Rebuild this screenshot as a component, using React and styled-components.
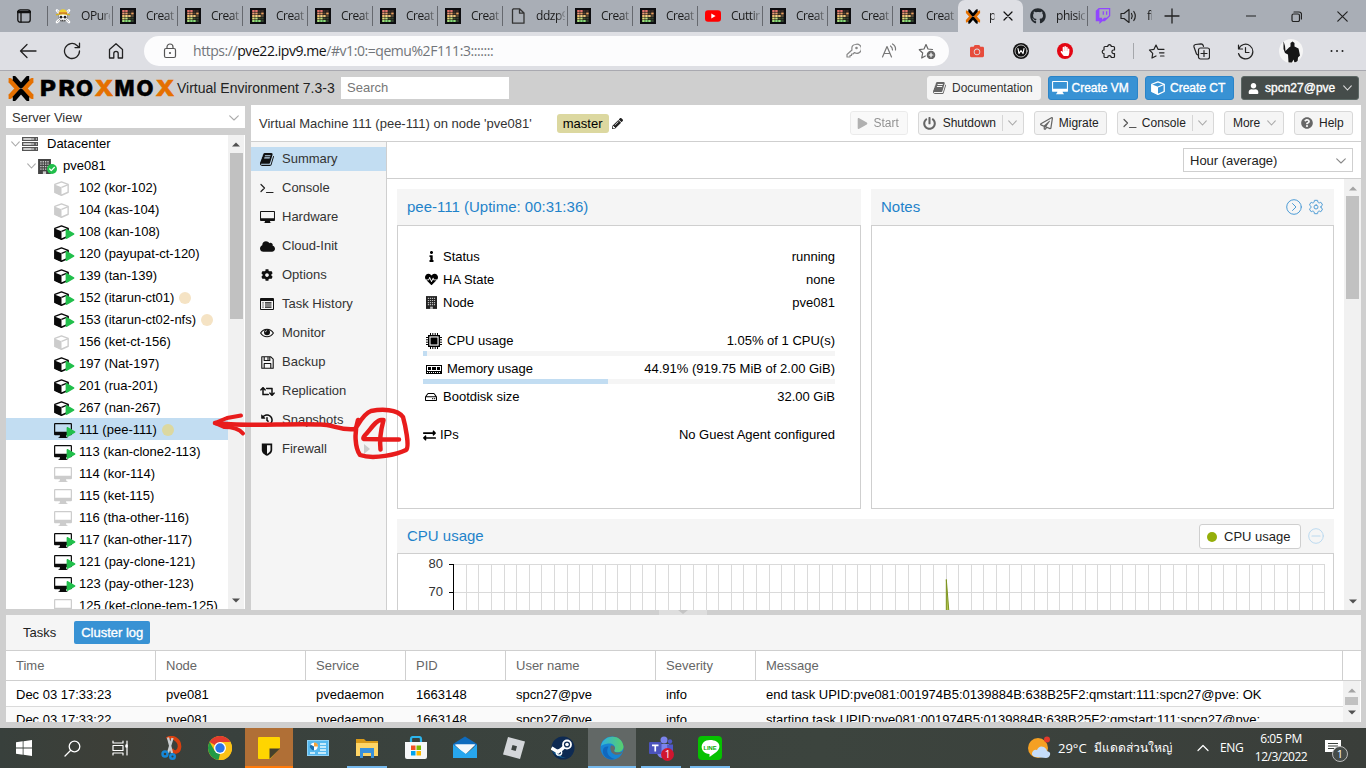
import React from "react";
import styled, { createGlobalStyle, css } from "styled-components";
import {
  FaCloud, FaCog, FaRetweet, FaHistory, FaPlay, FaPowerOff,
  FaRegPaperPlane, FaUser, FaQuestionCircle, FaPencilAlt, FaInfo, FaHeartbeat, FaRegHdd,
  FaExchangeAlt, FaGithub, FaTwitch, FaCheck, FaCamera, FaHandPaper,
} from "react-icons/fa";
import { IoSettingsOutline } from "react-icons/io5";

const GlobalStyle = createGlobalStyle`
  * { box-sizing: border-box; }
  body { margin: 0; overflow: hidden; background: #cfcfcf; }
  svg { display: block; flex: none; }
`;

const ui = '"Liberation Sans", Arial, Helvetica, sans-serif';
const chrome = '"Open Sans", "Noto Sans", sans-serif';

const Screen = styled.div`
  position: relative;
  width: 1366px;
  height: 768px;
  overflow: hidden;
  display: flex;
  flex-direction: column;
  background: #cfcfcf;
  font: 13px/16px ${ui};
  color: #000;
  white-space: nowrap;
`;

/* ---------- browser ---------- */
const TabStrip = styled.div`
  height: 32px;
  flex: none;
  display: flex;
  background: #a9aeb6;
  color: #1b1b1b;
  font: 12px/16px ${chrome};
`;
const StripStart = styled.div`
  width: 48px;
  display: flex;
  align-items: center;
  justify-content: center;
  position: relative;
`;
const Tab = styled.div`
  width: 65px;
  height: 32px;
  flex: none;
  display: flex;
  align-items: center;
  padding-left: 7px;
  gap: ${(p) => p.$gap ?? 10}px;
  ${(p) => p.$active && css`
    background: #dedfe4;
    border-radius: 7px 7px 0 0;
  `}
`;
const TabText = styled.span`
  width: ${(p) => p.$w ?? 29}px;
  flex: none;
  overflow: hidden;
  letter-spacing: -0.45px;
  mask-image: linear-gradient(90deg, #000 70%, rgba(0, 0, 0, 0.2) 100%);
`;
const TabRule = styled.i`
  width: 1px;
  height: 20px;
  margin-left: ${(p) => (p.$first ? 0 : "-8px")};
  background: #66696f;
  ${(p) => p.$first && css`position: absolute; left: 47px; top: 6px;`}
`;
const StripEnd = styled.div`
  flex: 1;
  display: flex;
  align-items: center;
  padding-left: 11px;
`;
const WindowKeys = styled.div`
  margin-left: auto;
  margin-right: 18px;
  display: flex;
  gap: 35px;
  align-items: center;
`;
const NavBar = styled.div`
  height: 39px;
  flex: none;
  display: flex;
  align-items: center;
  background: #dedfe4;
  border-bottom: 1px solid #a9a9b0;
`;
const NavKeys = styled.div`
  width: 144px;
  padding-left: 19px;
  display: flex;
  gap: 26px;
`;
const Address = styled.div`
  width: 805px;
  height: 30px;
  border-radius: 15px;
  background: #fcfcfd;
  display: flex;
  align-items: center;
  padding: 0 13px 0 18px;
  font: 14px/20px ${chrome};
  letter-spacing: -0.44px;
  color: #72757a;
  b { font-weight: 400; color: #111; }
`;
const Url = styled.span`margin-left: 15px; flex: 1;`;
const AddressKeys = styled.div`display: flex; gap: 20px; align-items: center;`;
const Extensions = styled.div`
  display: grid;
  grid-template-columns: repeat(4, 44px) 4px repeat(3, 44px) 48px 44px;
  align-items: center;
  justify-items: center;
  padding-left: 6px;
`;
const Round = styled.span`
  width: ${(p) => p.$size}px;
  height: ${(p) => p.$size}px;
  border-radius: 50%;
  display: flex;
  align-items: center;
  justify-content: center;
  overflow: hidden;
  background: ${(p) => p.$bg};
  color: #fff;
`;
const Divider = styled.i`width: 1px; height: 16px; background: #a5a7ab;`;

/* ---------- application header ---------- */
const AppHeader = styled.header`
  height: 34px;
  flex: none;
  display: flex;
  align-items: center;
  padding: 0 7px;
  font-size: 14px;
  color: #222;
`;
const Product = styled.span`width: 164px; margin-left: 2px;`;
const SearchBox = styled.div`
  width: 168px;
  height: 22px;
  padding: 3px 6px;
  background: #fff;
  color: #777;
  font-size: 13px;
`;
const HeaderKeys = styled.div`margin-left: auto; display: flex; gap: 7px;`;

const tones = {
  plain: css`background: #f5f5f5; border-color: #d8d8d8; color: #222; svg { color: #666; }`,
  light: css`background: #f5f5f5; border-color: #f5f5f5; color: #333; svg { color: #666; }`,
  blue: css`background: #3892d4; border-color: #2a84c8; color: #fff; -webkit-text-stroke: 0.35px #fff;`,
  dark: css`background: #454c4a; border-color: #5c6865; color: #fff; -webkit-text-stroke: 0.35px #fff;`,
};
const Button = styled.div`
  width: ${(p) => p.$w}px;
  height: 24px;
  border: 1px solid;
  border-radius: 3px;
  display: flex;
  align-items: center;
  padding-left: ${(p) => p.$pad ?? 4}px;
  font: 12px/16px ${ui};
  opacity: ${(p) => (p.$off ? 0.5 : 1)};
  ${(p) => tones[p.$tone ?? "plain"]}
`;
const IconSlot = styled.span`
  width: ${(p) => p.$w ?? 16}px;
  margin-right: ${(p) => p.$gap ?? 4}px;
  display: flex;
  justify-content: center;
  flex: none;
`;
const SplitArrow = styled.span`
  margin-left: ${(p) => p.$ml ?? 6}px;
  padding-left: 5px;
  height: 16px;
  display: flex;
  align-items: center;
  border-left: 1px solid ${(p) => (p.$bare ? "transparent" : "#d5d5d5")};
`;

/* ---------- resource tree ---------- */
const Workspace = styled.div`
  height: 505px;
  flex: none;
  display: flex;
  padding: 0 5px 0 6px;
  gap: 6px;
`;
const LeftColumn = styled.aside`
  width: 239px;
  display: flex;
  flex-direction: column;
  gap: 7px;
  padding: 1px 0;
`;
const ViewSelect = styled.div`
  height: 22px;
  background: #fff;
  display: flex;
  align-items: center;
  justify-content: space-between;
  padding: 1px 6px 0;
  color: #333;
`;
const TreePanel = styled.div`
  flex: 1;
  min-height: 0;
  display: flex;
  background: #fff;
  overflow: hidden;
  padding-right: 1px;
`;
const TreeRows = styled.div`width: 222px; margin-top: -3px; overflow: hidden;`;
const TreeRow = styled.div`
  height: 22px;
  display: flex;
  align-items: center;
  padding-top: 2px;
  padding-left: ${(p) => p.$indent}px;
  background: ${(p) => (p.$selected ? "#c2ddf2" : "transparent")};
`;
const TreeIcon = styled.span`
  position: relative;
  width: 25px;
  height: 16px;
  margin-left: ${(p) => p.$ml ?? 0}px;
  color: ${(p) => (p.$off ? "#ccc" : "#0a0a0a")};
  padding-top: 1px;
`;
const Running = styled(FaPlay)`
  position: absolute;
  left: 11px;
  top: 5px;
  color: #21bf4b;
`;
const Online = styled(Round)`position: absolute; left: 9px; top: 6px;`;
const Dot = styled.i`
  width: 12px;
  height: 12px;
  margin-left: 5px;
  border-radius: 50%;
  background: ${(p) => p.$c};
`;
const ScrollTrack = styled.div`
  width: ${(p) => p.$w}px;
  background: #f1f1f1;
  display: flex;
  flex-direction: column;
  align-items: center;
  flex: none;
  height: 100%;
  padding: ${(p) => p.$pad};
`;
const ScrollThumb = styled.div`
  width: 13px;
  height: ${(p) => p.$h}px;
  margin: ${(p) => p.$m} 0 auto;
  background: #c1c1c1;
`;

/* ---------- machine view ---------- */
const Machine = styled.main`width: 1110px; display: flex; flex-direction: column; background: #fff;`;
const TitleBar = styled.div`
  height: 37px;
  flex: none;
  border-bottom: 1px solid #cfcfcf;
  display: flex;
  align-items: center;
  padding: 0 8.500px 0 8px;
  color: #333;
`;
const Title = styled.span`padding-top: 1px;`;
const TagBadge = styled.span`
  height: 19px;
  width: 52px;
  margin: 0 3px 0 25px;
  border-radius: 3px;
  background: #dcd8a0;
  color: #000;
  text-align: center;
  line-height: 20px;
`;
const Actions = styled.div`margin-left: auto; display: flex; gap: 9.6px;`;
const MachineBody = styled.div`flex: 1; min-height: 0; display: flex;`;
const SideNav = styled.nav`
  width: 136px;
  background: #f5f5f5;
  border-right: 1px solid #cfcfcf;
  padding-top: 5px;
  display: flex;
  flex-direction: column;
  gap: 5px;
`;
const NavItem = styled.div`
  height: 24px;
  display: flex;
  align-items: center;
  padding-left: 7px;
  color: #333;
  background: ${(p) => (p.$on ? "#c2ddf2" : "transparent")};
  svg { color: #111; }
`;
const More = styled.i`
  margin-left: 37px;
  border: 5px solid transparent;
  border-left: 6px solid #ccc;
  border-right: 0;
`;
const Content = styled.section`flex: 1; display: flex; flex-direction: column; min-width: 0;`;
const RangeBar = styled.div`
  height: 37px;
  flex: none;
  display: flex;
  justify-content: flex-end;
  align-items: center;
  padding-right: 8px;
  border-bottom: 1px solid #cfcfcf;
`;
const RangeSelect = styled.div`
  width: 170px;
  height: 24px;
  border: 1px solid #cfcfcf;
  display: flex;
  align-items: center;
  justify-content: space-between;
  padding: 1px 6px 0;
  color: #222;
`;
const ScrollArea = styled.div`flex: 1; min-height: 0; display: flex; overflow: hidden;`;
const Cards = styled.div`
  flex: 1;
  display: grid;
  grid-template-columns: 464px 463px;
  grid-template-rows: 320px 200px;
  gap: 10px;
  padding: 10px;
`;
const Card = styled.article`
  grid-column: ${(p) => (p.$wide ? "span 2" : "auto")};
  display: flex;
  flex-direction: column;
`;
const CardHead = styled.div`
  height: ${(p) => p.$h ?? 36}px;
  flex: none;
  background: #f5f5f5;
  padding: 0 10px;
  display: flex;
  align-items: center;
  color: #1f83ca;
  font-size: 15px;
`;
const HeadKeys = styled.div`margin-left: auto; display: flex; gap: 6px; align-items: center; color: #4d9cd6;`;
const CardBody = styled.div`
  flex: 1;
  border: 1px solid #cfcfcf;
  padding: ${(p) => p.$pad ?? 0};
`;
const Stat = styled.div`
  height: ${(p) => p.$h ?? 23}px;
  padding-bottom: ${(p) => p.$pb ?? 0}px;
  display: flex;
  align-items: center;
`;
const StatLabel = styled.span`flex: 1;`;
const Meter = styled.div`
  height: 5px;
  background: #f5f5f5;
  margin-bottom: 5px;
`;
const MeterFill = styled.div`height: 5px; background: #c2ddf2; width: ${(p) => p.$v}%;`;
const Gap = styled.div`height: ${(p) => p.$h}px;`;
const Legend = styled.div`
  width: 102px;
  height: 25px;
  margin-right: 1px;
  border: 1px solid #cfcfcf;
  border-radius: 3px;
  background: #fff;
  color: #222;
  font-size: 13px;
  display: flex;
  align-items: center;
  padding: 1px 0 0 7px;
  gap: 7px;
`;
const LegendDot = styled.i`width: 10px; height: 10px; margin-top: 1px; border-radius: 50%; background: #94ae0a;`;

/* ---------- log ---------- */
const Splitter = styled.div`height: 5px; flex: none; display: flex; justify-content: center;`;
const Handle = styled.div`
  width: 48px;
  background: #dedede;
  display: flex;
  justify-content: center;
  i { border: 5px solid transparent; border-top: 4px solid #c4c4c4; border-bottom: 0; }
`;
const LogPanel = styled.section`
  width: 1356px;
  height: 107px;
  flex: none;
  margin-left: 5px;
  border-left: 1px solid #cfcfcf;
  background: #fff;
  overflow: hidden;
`;
const LogTabs = styled.div`
  height: 36px;
  background: #f5f5f5;
  border-bottom: 1px solid #cfcfcf;
  display: flex;
  align-items: center;
  padding-left: 17px;
  gap: 18px;
  color: #222;
`;
const LogTabOn = styled.span`
  height: 23px;
  width: 76px;
  border-radius: 2px;
  background: #3892d4;
  color: #fff;
  line-height: 23px;
  text-align: center;
  -webkit-text-stroke: 0.35px #fff;
`;
const columns = "150px 150px 100px 100px 150px 100px 587px 18px";
const LogHead = styled.div`
  display: grid;
  grid-template-columns: ${columns};
  height: 30px;
  border-bottom: 1px solid #cfcfcf;
  color: #666;
  line-height: 29px;
  span { padding-left: 10px; border-right: 1px solid #cfcfcf; }
`;
const LogBody = styled.div`display: flex; height: 41px; overflow: hidden;`;
const LogRow = styled.div`
  display: grid;
  grid-template-columns: 150px 150px 100px 100px 150px 100px 587px;
  height: 26px;
  line-height: ${(p) => (p.$alt ? 25 : 27)}px;
  background: ${(p) => (p.$alt ? "#fafafa" : "#fff")};
  border-bottom: 1px solid #dadada;
  span { padding-left: 10px; overflow: hidden; }
`;
const BottomEdge = styled.div`height: 6px; flex: none;`;

/* ---------- taskbar ---------- */
const Taskbar = styled.footer`
  height: 40px;
  flex: none;
  display: flex;
  background: linear-gradient(90deg, #38403c, #3d3f38 8%, #39413d 16%, #3c443e 60%, #3a3e3a);
  color: #fff;
  font: 12px/16px ${chrome};
`;
const SystemKeys = styled.div`width: 147px; display: flex;`;
const AppKeys = styled.div`display: flex; gap: 1px;`;
const TaskKey = styled.div`
  width: 48px;
  height: 40px;
  display: flex;
  align-items: center;
  justify-content: center;
  position: relative;
  background: ${(p) => p.$bg ?? "transparent"};
`;
const OpenMark = styled.i`
  position: absolute;
  bottom: 0;
  left: ${(p) => (p.$full ? 0 : 4)}px;
  right: ${(p) => (p.$full ? 0 : 4)}px;
  height: 2px;
  background: ${(p) => p.$c ?? "#76b9ed"};
`;
const CountBadge = styled(Round)`
  position: absolute;
  left: 24px;
  top: 20px;
  font: 10px/13px ${chrome};
`;
const Tray = styled.div`margin-left: auto; display: flex; align-items: center;`;
const TrayText = styled.span`
  width: ${(p) => p.$w}px;
  margin-left: ${(p) => p.$ml ?? 0}px;
  font-size: ${(p) => p.$size ?? 12}px;
  letter-spacing: ${(p) => p.$ls ?? 0}px;
`;
const Clock = styled.div`width: 62px; text-align: center; font-size: 12px; line-height: 18px; letter-spacing: -0.5px;`;
const Notices = styled.div`width: 42px; margin-left: 12px; position: relative; height: 26px; padding-top: 3px;`;
const NoticeCount = styled(Round)`
  position: absolute;
  left: 8px;
  top: 11px;
  border: 1px solid #bbb;
  font: 11px/14px ${chrome};
`;
const Ink = styled.svg`
  position: absolute;
  left: 206px;
  top: 400px;
  fill: none;
  stroke: #e81c1c;
  stroke-linecap: round;
  stroke-linejoin: round;
  pointer-events: none;
`;

/* ---------- drawings ---------- */
const Line = ({ w = 16, h = 16, sw = 1.2, c = "currentColor", children, ...rest }) => (
  <svg width={w} height={h} viewBox={`0 0 ${w} ${h}`} fill="none" stroke={c} strokeWidth={sw}
    strokeLinecap="round" strokeLinejoin="round" {...rest}>{children}</svg>
);
const Chevron = ({ c = "#aaa", w = 9 }) => (
  <Line w={w} h={6} c={c} sw={1.1}><path d={`M.7 .8 L${w / 2} 5 L${w - 0.7} .8`} /></Line>
);
const Triangle = ({ up, c = "#505050" }) => (
  <svg width="8" height="5" viewBox="0 0 8 5"><path fill={c} d={up ? "M0 4.5 4 .5 8 4.5z" : "M0 .5 4 4.5 8 .5z"} /></svg>
);
const Mark = ({ w = 28, h = 25 }) => (
  <svg width={w} height={h} viewBox="0 0 28 25" fill="none" strokeWidth="4.8" strokeLinejoin="round">
    <g stroke="#e57000"><path d="M1.6 4.3H3L10.4 12.5 3 20.7H1.6" /><path d="M26.4 4.3H25L17.6 12.5 25 20.7H26.4" /></g>
    <g stroke="#000"><path d="M5.8 2.3H7.2L14 10 20.8 2.3H22.2" /><path d="M5.8 22.7H7.2L14 15 20.8 22.7H22.2" /></g>
  </svg>
);
const wordmark = [["P", 5, 16], ["R", 23.5, 16.5], ["O", 41, 17], ["X", 59.5, 19], ["M", 79.5, 20], ["O", 101.5, 17], ["X", 120.5, 19]];
const Wordmark = () => (
  <svg width="140" height="25" viewBox="0 0 140 25">
    <g fontFamily="Inter, sans-serif" fontWeight="800" fontSize="21.500">
      {wordmark.map(([ch, x, len]) => (
        <text key={x} x={x} y="20.200" textLength={len} lengthAdjust="spacingAndGlyphs"
          fill={ch === "X" ? "#e57000" : "#000"} stroke={ch === "X" ? "#e57000" : "#000"} strokeWidth=".5">{ch}</text>
      ))}
    </g>
  </svg>
);
const gridColors = [
  ["#e0736b", "#e0736b", "#3a2b25", "#3a2b25"],
  ["#f09a7a", "#e89f6b", "#5a4a35", "#e9a060"],
  ["#f0c070", "#f2d08a", "#eec27a", "#5a4a35"],
  ["#e6dc7c", "#c3e07c", "#4b5535", "#3a4530"],
  ["#a6e07c", "#86dc78", "#8fe07c", "#33452e"],
];
const GridIcon = () => (
  <svg width="16" height="16" viewBox="0 0 16 16">
    <path d="M0 0h16v16H0z" fill="#0d0d10" />
    {gridColors.map((r, y) => r.map((c, x) => (
      <rect key={`${x}${y}`} x={2.2 + x * 3} y={2 + y * 2.5} width="2.5" height="2" fill={c} />
    )))}
  </svg>
);
const SkullIcon = () => (
  <svg width="16" height="16" viewBox="0 0 16 16">
    <path d="M2 2.5 14 14M14 2.5 2 14" stroke="#fff" strokeWidth="2.6" strokeLinecap="round" />
    <path d="M2 2.5 14 14M14 2.5 2 14" stroke="#777" strokeWidth=".5" />
    <ellipse cx="8" cy="9" rx="4.6" ry="4.2" fill="#fff" stroke="#555" strokeWidth=".5" />
    <path d="M3.5 6C3.6-.3 12.4-.3 12.5 6z" fill="#f0d02c" /><path d="M4 4.6h8v1.4H4z" fill="#c5352c" />
    <path d="M1 6.8Q8 5 15 6.8" stroke="#d5b41f" strokeWidth="1.3" fill="none" />
    <circle cx="6" cy="9.2" r="1.4" fill="#222" /><circle cx="10" cy="9.2" r="1.4" fill="#222" />
    <path d="M5.5 12.5h5" stroke="#333" strokeWidth="1.4" strokeDasharray="1 .6" />
  </svg>
);
const Youtube = () => (
  <svg width="16" height="16" viewBox="0 0 16 16"><rect y="2.3" width="16" height="11.4" rx="3" fill="#f00" /><path d="M6.3 5.5v5L10.6 8z" fill="#fff" /></svg>
);
const Page = () => <Line sw={1.3} c="#333"><path d="M3.5 .8h6L14 5v10.200H2.500V1.800zM9.500 .8V5.200H14" /></Line>;
const Book = ({ size = 14 }) => (
  <svg width={size} height={size} viewBox="0 0 1792 1792" fill="currentColor">
    <path d="M1639 478q40 57 18 129l-275 906q-19 64-76.500 107.500t-122.500 43.500h-923q-77 0-148.500-53.500t-99.500-131.500q-24-67-2-127 0-4 3-27t4-37q1-8-3-21.500t-3-19.500q2-11 8-21t16.500-23.500 16.500-23.500q23-38 45-91.500t30-91.500q3-10 .5-30t-.5-28q3-11 17-28t17-23q21-36 42-92t25-90q1-9-2.500-32t.5-28q4-13 22-30.500t22-22.500q19-26 42.500-84.500t27.500-96.500q1-8-3-25.500t-2-26.500q2-8 9-18t18-23 17-21q8-12 16.500-30.500t15-35 16-36 19.500-32 26.500-23.500 36-11.500 47.500 5.500l-1 3q38-9 51-9h761q74 0 114 56t18 130l-274 906q-36 119-71.500 153.500t-128.500 34.500h-869q-27 0-38 15-11 16-1 43 24 70 144 70h923q29 0 56-15.500t35-41.500l300-987q7-22 5-57 38 15 59 43zm-1064 2q-4 13 2 22.500t20 9.500h608q13 0 25.500-9.500t16.500-22.500l21-64q4-13-2-22.500t-20-9.500h-608q-13 0-25.500 9.500t-16.500 22.500zm-83 256q-4 13 2 22.500t20 9.500h608q13 0 25.500-9.500t16.500-22.500l21-64q4-13-2-22.500t-20-9.500h-608q-13 0-25.500 9.500t-16.500 22.500z" />
  </svg>
);
const Cube = ({ size = 15, face = "none" }) => (
  <svg width={size} height={size} viewBox="0 0 16 16">
    <path d="M8 .9 15.100 3.700V12L8 15.200 .9 12V3.700z" fill={face} stroke="currentColor" strokeWidth="1.500" strokeLinejoin="round" />
    <path d="M.6 3.700 8 6.700V15.600L.6 12.300z" fill="currentColor" />
    <path d="M8 6.800 15.200 3.800" stroke="currentColor" strokeWidth="1.300" />
  </svg>
);
const Monitor = ({ w = 17 }) => (
  <svg width={w} height={w * 0.83} viewBox="0 0 18 15">
    <path fill="currentColor" fillRule="evenodd" d="M1 0h16q1 0 1 1v10.200q0 1-1 1h-5l.5 2h1V15H4.500v-.8h1l.5-2H1q-1 0-1-1V1q0-1 1-1zM1.200 1.200v7.600h15.600V1.200z" />
  </svg>
);
const ServerRack = () => (
  <svg width="16" height="14" viewBox="0 0 16 14">
    {[0, 5, 10].map((y) => (
      <g key={y}><rect x=".5" y={y + 0.5} width="15" height="3" fill="#aaa" stroke="#555" />
        <path d={`M2 ${y + 2}h7`} stroke="#eee" /><path d={`M12 ${y + 2}h2`} stroke="#222" /></g>
    ))}
  </svg>
);
const Building = ({ c = "#222", g = "#bbb", w = 11, h = 13 }) => (
  <svg width={w} height={h} viewBox="0 0 12 14">
    <path d="M0 0h12v14H0z" fill={c} />
    {[2, 4.3, 6.6, 8.9].map((y) => <path key={y} d={`M2 ${y + 0.5}h8`} stroke={g} strokeWidth="1.300" strokeDasharray="1.300 .9" />)}
    <path d="M4.500 11.500h3V14h-3z" fill={g} />
  </svg>
);
const Prompt = ({ c = "#222" }) => (
  <Line w={14} h={12} c={c} sw={1.2}><path d="M1 2.500 4.500 6 1 9.500M6.500 10.500h6.500" /></Line>
);
const Shield = () => (
  <svg width="12" height="13" viewBox="0 0 12 13"><path fillRule="evenodd" fill="currentColor" d="M.8 .5h10.400V7c0 3-3 4.800-5.200 5.800C3.800 11.800 .8 10 .8 7zM6 2.200v8.700C8 9.800 9.500 8.500 9.500 7V2.200z" /></svg>
);
const ListAlt = () => (
  <svg width="14" height="12" viewBox="0 0 14 12"><path fill="currentColor" fillRule="evenodd" d="M1 0h12q1 0 1 1v10q0 1-1 1H1q-1 0-1-1V1q0-1 1-1zM1 3v8h12V3z" />
    <path d="M2.500 4.800h1M5 4.800h6.500M2.500 7h1M5 7h6.500M2.500 9.200h1M5 9.200h6.500" stroke="currentColor" strokeWidth="1.200" /></svg>
);
const EyeIcon = () => (
  <svg width="14" height="10" viewBox="0 0 14 10"><path d="M.6 5Q3 1.200 7 1.200T13.400 5Q11 8.800 7 8.800T.6 5z" fill="none" stroke="currentColor" strokeWidth="1.100" /><circle cx="7" cy="4.300" r="3" fill="currentColor" /><path d="M5.300 4.200Q5.400 2.700 7 2.600" stroke="#f5f5f5" strokeWidth=".7" fill="none" /></svg>
);
const Floppy = () => (
  <Line w={13} h={13} sw={1.1}><path d="M.8 .8H9.800L12.200 3.200V12.200H.8zM3.200 .8V4.500H8.800V.8M3.200 12.200V7.500H9.800V12.200M7 1.500v2" /></Line>
);
const Cpu = () => (
  <svg width="16" height="16" viewBox="0 0 16 16"><g fill="none" stroke="#000">
    <path d="M4.500 0v16M6.800 0v16M9.200 0v16M11.500 0v16M0 4.500h16M0 6.800h16M0 9.200h16M0 11.500h16" />
    <rect x="2.700" y="2.700" width="10.600" height="10.600" fill="#fff" strokeWidth="1.400" /></g><path d="M4.500 4.500h7v7h-7z" /></svg>
);
const Ram = () => (
  <svg width="16" height="9" viewBox="0 0 16 9" shapeRendering="crispEdges"><path fillRule="evenodd" d="M0 0h16v9H0zM1 1v5h14V1z" /><path d="M2 2h3v3H2zM6 2h4v3H6zM11 2h3v3h-3z" /><path d="M1 7.500h14" stroke="#fff" strokeDasharray="1 1" /></svg>
);
const GridChart = () => (
  <svg width="935" height="90" viewBox="0 0 935 90" shapeRendering="crispEdges">
    {Array.from({ length: 70 }, (_, i) => <rect key={i} x={Math.round(55 + i * 12.63)} y="10" width="1" height="80" fill="#dadada" />)}
    <path d="M55 10.500h872M55 38.500h872M55 66.500h872" stroke="#dadada" />
    <path d="M55.500 10v80M51 10.500h4M51 38.500h4M51 66.500h4" stroke="#000" />
    <path d="M548.300 90V25.500L553.500 90z" fill="#94ae0a" fillOpacity=".7" stroke="#7d9420" shapeRendering="auto" />
    <g fontFamily="Liberation Sans, Arial, sans-serif" fontSize="13" fill="#333" textAnchor="end">
      <text x="45" y="14">80</text><text x="45" y="42">70</text><text x="45" y="70">60</text>
    </g>
  </svg>
);

/* taskbar application drawings */
const Svg = ({ s = 24, children }) => <svg width={s} height={s} viewBox="0 0 24 24">{children}</svg>;
const WindowsLogo = () => <svg width="16" height="16" viewBox="0 0 16 16" fill="#fff"><path d="M0 2.300 6.700 1.300V7.600H0zM7.500 1.200 16 0v7.600H7.500zM0 8.400h6.700v6.300L0 13.700zM7.500 8.400H16V16l-8.500-1.200z" /></svg>;
const Snip = () => <Svg><path d="M8 3C13-1 21 4 20.500 11 20 17 14 17.500 12.500 13" fill="none" stroke="#d8400f" strokeWidth="3.600" /><path d="M9 1.500 13 17M13.500 2 9 17" stroke="#c9cdd0" strokeWidth="2.300" /><g fill="none" stroke="#1687d9" strokeWidth="2.400"><circle cx="6" cy="18" r="2.500" /><circle cx="13.500" cy="20.500" r="2.300" /></g></Svg>;
const ChromeLogo = () => <Svg><circle cx="12" cy="12" r="12" fill="#fbc116" /><path d="M12 12 1.600 6A12 12 0 0 1 22.400 6H12z" fill="#e33b2e" /><path d="M1.600 6 6.800 15 12 18 10.500 23.900A12 12 0 0 1 1.600 6z" fill="#229a45" /><path d="M22.400 6H12v6l5 3-6.500 8.900A12 12 0 0 0 22.400 6z" fill="#fbc116" /><circle cx="12" cy="12" r="6" fill="#fff" /><circle cx="12" cy="12" r="4.700" fill="#2a74e8" /></Svg>;
const Sticky = () => <Svg><path d="M1 2q0-1 1-1h20q1 0 1 1v10l-10 11H2q-1 0-1-1z" fill="#ffd500" /><path d="M12.500 12.500H23L12.500 23z" fill="#46402c" /></Svg>;
const ControlPanel = () => <svg width="22" height="17" viewBox="0 0 22 17"><rect x=".5" y=".5" width="21" height="15" fill="#56b8ee" stroke="#8fd2f7" /><circle cx="7" cy="6.500" r="3.700" fill="#fff" /><path d="M7 6.500V2.500a4 4 0 0 1 4 4z" fill="#f6a33c" /><path d="M7 6.500v4a4 4 0 0 1-3.500-6z" fill="#176fb3" /><path d="M13 4h6M13 7h6M13 10h6M3 13h5M11 13h8" stroke="#eafaff" strokeWidth="1.300" /></svg>;
const Explorer = () => <Svg><path d="M1 3h8l2 2h12v5H1z" fill="#d99a19" /><path d="M1 7h22v13H1z" fill="#ffd566" /><path d="M5 12h14v10h-3v-5H8v5H5z" fill="#3a91db" /></Svg>;
const Store = () => <Svg><path d="M7 6V3q0-2 2-2h6q2 0 2 2v3" fill="none" stroke="#2cb5ec" strokeWidth="2.200" /><path d="M1 6h22v15q0 2-2 2H3q-2 0-2-2z" fill="#f6f7f8" /><path d="M7 9.500h4.500V14H7z" fill="#f25022" /><path d="M12.500 9.500H17V14h-4.500z" fill="#7fba00" /><path d="M7 15h4.500v4.500H7z" fill="#00a4ef" /><path d="M12.500 15H17v4.500h-4.500z" fill="#ffb900" /></Svg>;
const Mail = () => <Svg><path d="M0 8 12 .5 24 8v3H0z" fill="#0f6bbd" /><path d="M1.500 8.500h21L12 19z" fill="#f4f8fb" /><path d="M0 8.500 13 18 24 8.500V22H0z" fill="#27a6ee" /><path d="M3 8.500H22L12 16.500z" fill="#f4f8fb" /></Svg>;
const Roblox = () => <Svg><path d="M6 1 23 5.500 18 23 1 18.500z" fill="#d4d7da" /><path d="M10.500 9 15 10.200 13.700 15 9.200 13.800z" fill="#3c4340" /></Svg>;
const Steam = () => <Svg><circle cx="12" cy="12" r="11.500" fill="#0e2a52" /><path d="M1 15Q12 27 22 17 16 23.500 9 20z" fill="#1381b8" /><path d="M0.500 12 7 16 11 13 15 9" stroke="#fff" strokeWidth="3.500" fill="none" /><circle cx="16" cy="8.500" r="4" fill="#0e2a52" stroke="#fff" strokeWidth="1.800" /><circle cx="16" cy="8.500" r="1.800" fill="#fff" /><circle cx="8" cy="16.500" r="2.700" fill="none" stroke="#fff" strokeWidth="1.300" /></Svg>;
const Edge = () => (
  <Svg><defs><linearGradient id="edgeTop"><stop stopColor="#2dafe0" /><stop offset="1" stopColor="#59cf6a" /></linearGradient></defs>
    <circle cx="12" cy="12" r="11.500" fill="#1784d4" /><path d="M1 10C3-2 22-3 23.500 10.500c0 5-5 6.500-8.500 5.500-2-.7 0-2 0-4 0-3-3-5-7-4.500-3 .3-5.500 1.500-7 2.500z" fill="url(#edgeTop)" />
    <path d="M8.500 10.500C5 16 9 22 15 23 8 25 2 20 3 14c.5-3 3-4 5.500-3.500z" fill="#1067bd" /><path d="M11 9.500c3-.5 4 1.500 4 3-1 2-1.500 2.500 0 3.500 3 1.200 6 .5 8-1-2 4-7 5-10 2.500-3-2-3-6-2-8z" fill="#666b68" /></Svg>
);
const Teams = () => <Svg><circle cx="15" cy="4" r="3.500" fill="#7b83eb" /><circle cx="21" cy="5.500" r="2.200" fill="#5059c9" /><path d="M9 8h11v9q-1 5-6 5t-6-5z" fill="#7b83eb" /><path d="M18 8.500h6v7q-1 4-5 4z" fill="#5059c9" /><rect y="6" width="12.500" height="12" rx="1" fill="#4b53bc" /><path d="M3 9.300h6.500M6.250 9.300v6.200" stroke="#fff" strokeWidth="1.700" /></Svg>;
const LineApp = () => <Svg><rect width="24" height="24" rx="4" fill="#06c100" /><path d="M12 4c11 0 12 9 5 13l-5.500 4v-3C1 17.500 1 4 12 4z" fill="#fff" /><text x="12" y="13.500" fontFamily="Liberation Sans, Arial, sans-serif" fontWeight="700" fontSize="5.800" fill="#06a800" textAnchor="middle">LINE</text></Svg>;
const Weather = () => <Svg><circle cx="11" cy="12" r="10" fill="#f5a023" /><path d="M8 21q-5-2-2-6 2-2 4-1 2-5 7-3 3 2 3 4 4 1 3 4-1 3-4 3z" fill="#c5ddfa" /><circle cx="20" cy="3.500" r="3" fill="#e33a2b" /></Svg>;

const Favicon = { grid: GridIcon, skull: SkullIcon, tube: Youtube, page: Page };
const tabs = [
  ["skull", "OPure"], ["grid", "Creat"], ["grid", "Creat"], ["grid", "Creat"], ["grid", "Creat"],
  ["grid", "Creat"], ["grid", "Creat"], ["page", "ddzp9"], ["grid", "Creat"], ["grid", "Creat"],
  ["tube", "Cuttin"], ["grid", "Creat"], ["grid", "Creat"], ["grid", "Creat"],
];
const guests = [
  ["ct", "102 (kor-102)"], ["ct", "104 (kas-104)"], ["ct", "108 (kan-108)", 1], ["ct", "120 (payupat-ct-120)", 1],
  ["ct", "139 (tan-139)", 1], ["ct", "152 (itarun-ct01)", 1, "#f5e3c4"], ["ct", "153 (itarun-ct02-nfs)", 1, "#f5e3c4"],
  ["ct", "156 (ket-ct-156)"], ["ct", "197 (Nat-197)", 1], ["ct", "201 (rua-201)", 1], ["ct", "267 (nan-267)", 1],
  ["vm", "111 (pee-111)", 1, "#dcd8a0", true], ["vm", "113 (kan-clone2-113)", 1], ["vm", "114 (kor-114)"],
  ["vm", "115 (ket-115)"], ["vm", "116 (tha-other-116)"], ["vm", "117 (kan-other-117)", 1],
  ["vm", "121 (pay-clone-121)", 1], ["vm", "123 (pay-other-123)", 1], ["vm", "125 (ket-clone-tem-125)"],
];
const navItems = [
  ["Summary", <Book size={15} />], ["Console", <Prompt />], ["Hardware", <Monitor w={15} />],
  ["Cloud-Init", <FaCloud size={15} />], ["Options", <FaCog size={12} />], ["Task History", <ListAlt />],
  ["Monitor", <EyeIcon />], ["Backup", <Floppy />], ["Replication", <FaRetweet size={15} />],
  ["Snapshots", <FaHistory size={12} />], ["Firewall", <Shield />],
];
const log = [
  ["Dec 03 17:33:23", "pve081", "pvedaemon", "1663148", "spcn27@pve", "info", "end task UPID:pve081:001974B5:0139884B:638B25F2:qmstart:111:spcn27@pve: OK"],
  ["Dec 03 17:33:22", "pve081", "pvedaemon", "1663148", "spcn27@pve", "info", "starting task UPID:pve081:001974B5:0139884B:638B25F2:qmstart:111:spcn27@pve:"],
];
const apps = [
  [Snip], [ChromeLogo], [Sticky, "#b06f36", "#ff7a0a", true], [ControlPanel], [Explorer, null, "#76b9ed"], [Store],
  [Mail], [Roblox], [Steam], [Edge, "#626866", "#76b9ed", true], [Teams, null, "#76b9ed", false, "1"], [LineApp, null, "#76b9ed"],
];

function Browser() {
  return (
    <>
      <TabStrip>
        <StripStart><Line w={14} h={14} sw={1.3} c="#111"><rect x=".8" y=".8" width="12.400" height="12.400" rx="2.500" /><path d="M1 3h12" strokeWidth="2.500" /><path d="M4 4v9" /></Line><TabRule $first /></StripStart>
        {tabs.map(([kind, label], i) => {
          const Icon = Favicon[kind];
          return <Tab key={i}><Icon /><TabText>{label}</TabText>{i < 13 && <TabRule />}</Tab>;
        })}
        <Tab $active $gap={8}><Mark w={16} h={15} /><TabText $w={6}>p</TabText><Line w={10} h={10} c="#111"><path d="M1 1 9 9M9 1 1 9" /></Line></Tab>
        <Tab><FaGithub size={16} color="#24292e" /><TabText>phisic</TabText><TabRule /></Tab>
        <Tab $gap={9}><FaTwitch size={16} color="#9146ff" /><Line w={18} h={16} c="#222"><path d="M1 5.500h3L9 1.500v13L4 10.500H1zM11.500 5.500q1.500 2.500 0 5M13.800 3.500q3 4.500 0 9" /></Line><TabText $w={5}>fi</TabText><TabRule /></Tab>
        <StripEnd>
          <Line c="#222" sw={1.3}><path d="M8 1v14M1 8h14" /></Line>
          <WindowKeys>
            <Line w={10} h={10} c="#222"><path d="M0 5h10" /></Line>
            <Line w={11} h={11} c="#222"><rect x="1" y="3" width="7.500" height="7.500" rx="1.500" /><path d="M3 1h5q2.500 0 2.500 2.500V8" /></Line>
            <Line w={11} h={11} c="#222"><path d="M.8 .8 10.200 10.200M10.200 .8 .8 10.200" /></Line>
          </WindowKeys>
        </StripEnd>
      </TabStrip>
      <NavBar>
        <NavKeys>
          <Line w={18} h={18} sw={1.3} c="#222"><path d="M17 9H1.500M8 2.500 1.500 9 8 15.500" /></Line>
          <Line w={18} h={18} sw={1.3} c="#222"><path d="M16.500 9A7.500 7.500 0 1 1 14 3.400L16.300 5.500M16.500 1.200V5.600H12" /></Line>
          <Line w={18} h={18} sw={1.3} c="#222"><path d="M2.500 7.500 9 1.800l6.500 5.700V16h-4.300v-4.500a2.200 2.200 0 0 0-4.400 0V16H2.500z" /></Line>
        </NavKeys>
        <Address>
          <Line c="#555" sw={1.2}><rect x="2.500" y="5.500" width="11" height="9" rx="1.500" /><path d="M5 5.500V4a3 3 0 0 1 6 0v1.500" /><circle cx="8" cy="10" r=".5" /></Line>
          <Url>https://<b>pve22.ipv9.me</b>/#v1:0:=qemu%2F111:3:::::::</Url>
          <AddressKeys>
            <Line c="#888" w={15}><path d="M9.500 1.500a4.500 4.500 0 1 1-1 8L7 11H5.500v1.500H4V14H1v-2.500L6 7C5.300 3.500 7 1.500 9.500 1.500z" /><circle cx="10.500" cy="5" r=".7" /></Line>
            <Line c="#777" w={17}><path d="M1.500 14 6 3.500 10.500 14M3 10.500h6M9.500 3q2 1.500 2 4M11.500 1q3.500 2 3 6" /></Line>
            <Line c="#666" w={18}><path d="M8 1.500 10 6l4.500 .5M8 1.500 6 6l-4.700.7L4.700 10l-1 5 3.600-2" /><circle cx="13" cy="12" r="3.700" fill="#666" /><path d="M13 10.200v3.600M11.200 12h3.600" stroke="#fff" /></Line>
          </AddressKeys>
        </Address>
        <Extensions>
          <FaCamera size={14} color="#e74c3c" />
          <Round $size={16} $bg="#111"><Line w={14} h={14} c="#fff"><circle cx="7" cy="7" r="6" strokeWidth=".7" /><path d="M4 4.500 5 9.500 7 6.500 9 9.500 10 4.500" /></Line></Round>
          <Round $size={16} $bg="#e30613"><FaHandPaper size={10} /></Round>
          <Line c="#222"><path d="M4 3.500h2.700a1.800 1.800 0 1 1 3.600 0H12.500q1 0 1 1V7h-.8a1.800 1.800 0 1 0 0 3.600h.8v2.900q0 1-1 1h-2.200a1.800 1.800 0 1 0-3.600 0H4q-1 0-1-1v-2.900a1.800 1.800 0 1 1 0-3.600V4.500q0-1 1-1z" /></Line>
          <Divider />
          <Line w={18} c="#222"><path d="M8 13 4 15l.7-4.700L1.500 7l4.500-.7L8 2l2 4.300h6M11.500 9.800H16M12.500 13H16" /></Line>
          <Line w={17} h={17} c="#222"><path d="M5 12 3.500 11 1 4q-.5-2 1.500-2.500L8 .8q2 0 2.500 2.500" /><rect x="5.500" y="5" width="11" height="11" rx="2" /><path d="M11 7.500v6M8 10.500h6" /></Line>
          <Line w={17} h={17} c="#222"><path d="M1.500 2v4h4M1.700 6A7.300 7.300 0 1 1 1.500 10.500M8.500 4.500v5H12" /></Line>
          <Round $size={24} $bg="#f5f5f5"><svg width="24" height="24" viewBox="0 0 24 24"><path d="M4.500 2 6 7l.5 5 3.500-3.500 1.500-1V4l2-1.500 2 1.500v3.500l4 2 1.500 7-2 2-.5 5h-3l-1-3-1.500 3H9.500l-.5-8-3-1.500L4.500 10z" fill="#161616" /></svg></Round>
          <Line w={14} h={4} c="#222" sw={2}><path d="M1.500 2h.01M7 2h.01M12.500 2h.01" /></Line>
        </Extensions>
      </NavBar>
    </>
  );
}

function Tree() {
  return (
    <LeftColumn>
      <ViewSelect>Server View<Chevron w={10} /></ViewSelect>
      <TreePanel>
        <TreeRows>
          <TreeRow $indent={5}><Chevron /><TreeIcon $ml={2}><ServerRack /></TreeIcon>Datacenter</TreeRow>
          <TreeRow $indent={21}><Chevron /><TreeIcon $ml={2}><Building c="#444" g="#ccc" w={13} h={15} /><Online $size={10} $bg="#21bf4b"><FaCheck size={6} /></Online></TreeIcon>pve081</TreeRow>
          {guests.map(([kind, label, on, tag, selected]) => (
            <TreeRow key={label} $indent={48} $selected={selected}>
              <TreeIcon $off={!on}>
                {kind === "ct" ? <Cube size={15} face="#fff" /> : <Monitor w={18} />}
                {on && <Running size={10} style={{ left: kind === "ct" ? 11 : 12 }} />}
              </TreeIcon>
              {label}{tag && <Dot $c={tag} />}
            </TreeRow>
          ))}
        </TreeRows>
        <ScrollTrack $w={16} $pad="7px 0 6px"><Triangle up /><ScrollThumb $h={166} $m="6px" /><Triangle /></ScrollTrack>
      </TreePanel>
    </LeftColumn>
  );
}

function Summary() {
  return (
    <Cards>
      <Card>
        <CardHead>pee-111 (Uptime: 00:31:36)</CardHead>
        <CardBody $pad="19px 25px">
          <Stat><IconSlot><FaInfo size={11} /></IconSlot><StatLabel>Status</StatLabel>running</Stat>
          <Stat><IconSlot><FaHeartbeat size={13} /></IconSlot><StatLabel>HA State</StatLabel>none</Stat>
          <Stat><IconSlot><Building /></IconSlot><StatLabel>Node</StatLabel>pve081</Stat>
          <Gap $h={17} />
          <Stat $h={20}><IconSlot $w={22} $gap={2}><Cpu /></IconSlot><StatLabel>CPU usage</StatLabel>1.05% of 1 CPU(s)</Stat>
          <Meter><MeterFill $v={1.05} /></Meter>
          <Stat $h={18} $pb={2}><IconSlot $w={22} $gap={2}><Ram /></IconSlot><StatLabel>Memory usage</StatLabel>44.91% (919.75 MiB of 2.00 GiB)</Stat>
          <Meter><MeterFill $v={44.91} /></Meter>
          <Stat $h={18} $pb={2}><IconSlot><FaRegHdd size={12} /></IconSlot><StatLabel>Bootdisk size</StatLabel>32.00 GiB</Stat>
          <Gap $h={17} />
          <Stat $h={22}><IconSlot $w={13}><FaExchangeAlt size={13} /></IconSlot><StatLabel>IPs</StatLabel>No Guest Agent configured</Stat>
        </CardBody>
      </Card>
      <Card>
        <CardHead>Notes<HeadKeys><Line><circle cx="8" cy="8" r="7.300" strokeWidth="1" /><path d="M6.500 4.500 10 8 6.500 11.500" strokeWidth="1" /></Line><IoSettingsOutline size={16} /></HeadKeys></CardHead>
        <CardBody />
      </Card>
      <Card $wide>
        <CardHead $h={34}>CPU usage<HeadKeys><Legend><LegendDot />CPU usage</Legend><Line c="#bcdaf0"><circle cx="8" cy="8" r="7.300" strokeWidth="1" /><path d="M4 8h8" /></Line></HeadKeys></CardHead>
        <CardBody><GridChart /></CardBody>
      </Card>
    </Cards>
  );
}

function MachineView() {
  return (
    <Machine>
      <TitleBar>
        <Title>Virtual Machine 111 (pee-111) on node 'pve081'</Title><TagBadge>master</TagBadge><FaPencilAlt size={11} color="#222" />
        <Actions>
          <Button $w={58.5} $off><IconSlot $gap={3}><FaPlay size={11} /></IconSlot>Start</Button>
          <Button $w={106.5}><IconSlot $w={14}><FaPowerOff size={13} /></IconSlot><span style={{ marginLeft: 2 }}>Shutdown</span><SplitArrow><Chevron /></SplitArrow></Button>
          <Button $w={73.5}><IconSlot><FaRegPaperPlane size={13} /></IconSlot>Migrate</Button>
          <Button $w={97.5}><IconSlot><Prompt c="#555" /></IconSlot>Console<SplitArrow><Chevron /></SplitArrow></Button>
          <Button $w={60.5} $pad={8}>More<SplitArrow $bare $ml={1}><Chevron /></SplitArrow></Button>
          <Button $w={58.5}><IconSlot><FaQuestionCircle size={12} /></IconSlot>Help</Button>
        </Actions>
      </TitleBar>
      <MachineBody>
        <SideNav>
          {navItems.map(([label, icon], i) => (
            <NavItem key={label} $on={i === 0}><IconSlot $w={18} $gap={6}>{icon}</IconSlot>{label}{label === "Firewall" && <More />}</NavItem>
          ))}
        </SideNav>
        <Content>
          <RangeBar><RangeSelect>Hour (average)<Chevron w={10} c="#888" /></RangeSelect></RangeBar>
          <ScrollArea>
            <Summary />
            <ScrollTrack $w={17} $pad="7px 0 6px"><Triangle up c="#a3a3a3" /><ScrollThumb $h={103} $m="5px" /><Triangle /></ScrollTrack>
          </ScrollArea>
        </Content>
      </MachineBody>
    </Machine>
  );
}

function Log() {
  return (
    <LogPanel>
      <LogTabs>Tasks<LogTabOn>Cluster log</LogTabOn></LogTabs>
      <LogHead>{["Time", "Node", "Service", "PID", "User name", "Severity", "Message"].map((c) => <span key={c}>{c}</span>)}</LogHead>
      <LogBody>
        <div>{log.map((row, i) => <LogRow key={i} $alt={i % 2}>{row.map((c, j) => <span key={j}>{c}</span>)}</LogRow>)}</div>
        <ScrollTrack $w={17} $pad="7px 0"><Triangle up c="#a3a3a3" /><ScrollThumb $h={8} $m="4px" /><Triangle /></ScrollTrack>
      </LogBody>
    </LogPanel>
  );
}

function Desktop() {
  return (
    <Taskbar>
      <SystemKeys>
        <TaskKey><WindowsLogo /></TaskKey>
        <TaskKey><Line w={17} h={17} c="#fff" sw={1.3}><circle cx="10.500" cy="6.500" r="5.300" /><path d="M6.500 10.500 1 16" /></Line></TaskKey>
        <TaskKey><Line w={17} h={16} c="#fff" sw={1.2}><path d="M1 1v2h10V1M1 15v-2h10v2M1 5.500h10v5H1zM15 1v14" /><path d="M14.500 5.500v1" strokeWidth="2.500" /></Line></TaskKey>
      </SystemKeys>
      <AppKeys>
        {apps.map(([Icon, bg, mark, full, count], i) => (
          <TaskKey key={i} $bg={bg}><Icon />{mark && <OpenMark $c={mark} $full={full} />}{count && <CountBadge $size={13} $bg="#d0162f">{count}</CountBadge>}</TaskKey>
        ))}
      </AppKeys>
      <Tray>
        <Weather />
        <TrayText $w={36} $ml={7} $size={13}>29°C</TrayText>
        <TrayText $w={103} $size={12.2}>มีแดดส่วนใหญ่</TrayText>
        <Line w={12} h={8} c="#fff"><path d="M1 6.500 6 1.500 11 6.500" /></Line>
        <TrayText $w={30} $ml={11} $ls={-0.3}>ENG</TrayText>
        <Clock>6:05 PM<br />12/3/2022</Clock>
        <Notices><svg width="18" height="18" viewBox="0 0 18 18"><path d="M1 2h16v12h-5l-3 3v-3H1z" fill="#fff" /><path d="M4 5.500h10M4 8h10M4 10.500h6" stroke="#3a413d" /></svg><NoticeCount $size={16} $bg="#454b48">1</NoticeCount></Notices>
      </Tray>
    </Taskbar>
  );
}

export default function App() {
  return (
    <Screen>
      <GlobalStyle />
      <Browser />
      <AppHeader>
        <Mark /><Wordmark />
        <Product>Virtual Environment 7.3-3</Product>
        <SearchBox>Search</SearchBox>
        <HeaderKeys>
          <Button $w={113.5} $tone="light"><IconSlot><Book size={14} /></IconSlot>Documentation</Button>
          <Button $w={90.5} $tone="blue" $pad={3}><IconSlot><Monitor w={16} /></IconSlot>Create VM</Button>
          <Button $w={89} $tone="blue"><IconSlot $w={15}><Cube size={14} /></IconSlot><span style={{ marginLeft: 1 }}>Create CT</span></Button>
          <Button $w={118} $tone="dark"><IconSlot $w={14} $gap={5}><FaUser size={11} /></IconSlot>spcn27@pve<SplitArrow $bare $ml={2}><Chevron c="#ddd" /></SplitArrow></Button>
        </HeaderKeys>
      </AppHeader>
      <Workspace><Tree /><MachineView /></Workspace>
      <Splitter><Handle><i /></Handle></Splitter>
      <Log />
      <BottomEdge />
      <Desktop />
      <Ink width="210" height="66" viewBox="205 400 210 66">
        <path strokeWidth="4.500" d="M357 420C353 432 354 448 359 455 373 460 397 454 405 450 409 447 404 424 402 417 396 409 381 409 370 411 362 414 358 424 354 429 340 431 331 424 319 424.500 287 423 242 427 214 423" />
        <path strokeWidth="4" d="M240 415.500 226 418 214 423 223 427Q237 427 242 433.500" />
        <path strokeWidth="4.500" d="M398 439.500 363 439Q361 438 366 433C371 427 376 420 380 420L382.500 420Q378 437 379.500 449.500" />
      </Ink>
    </Screen>
  );
}
